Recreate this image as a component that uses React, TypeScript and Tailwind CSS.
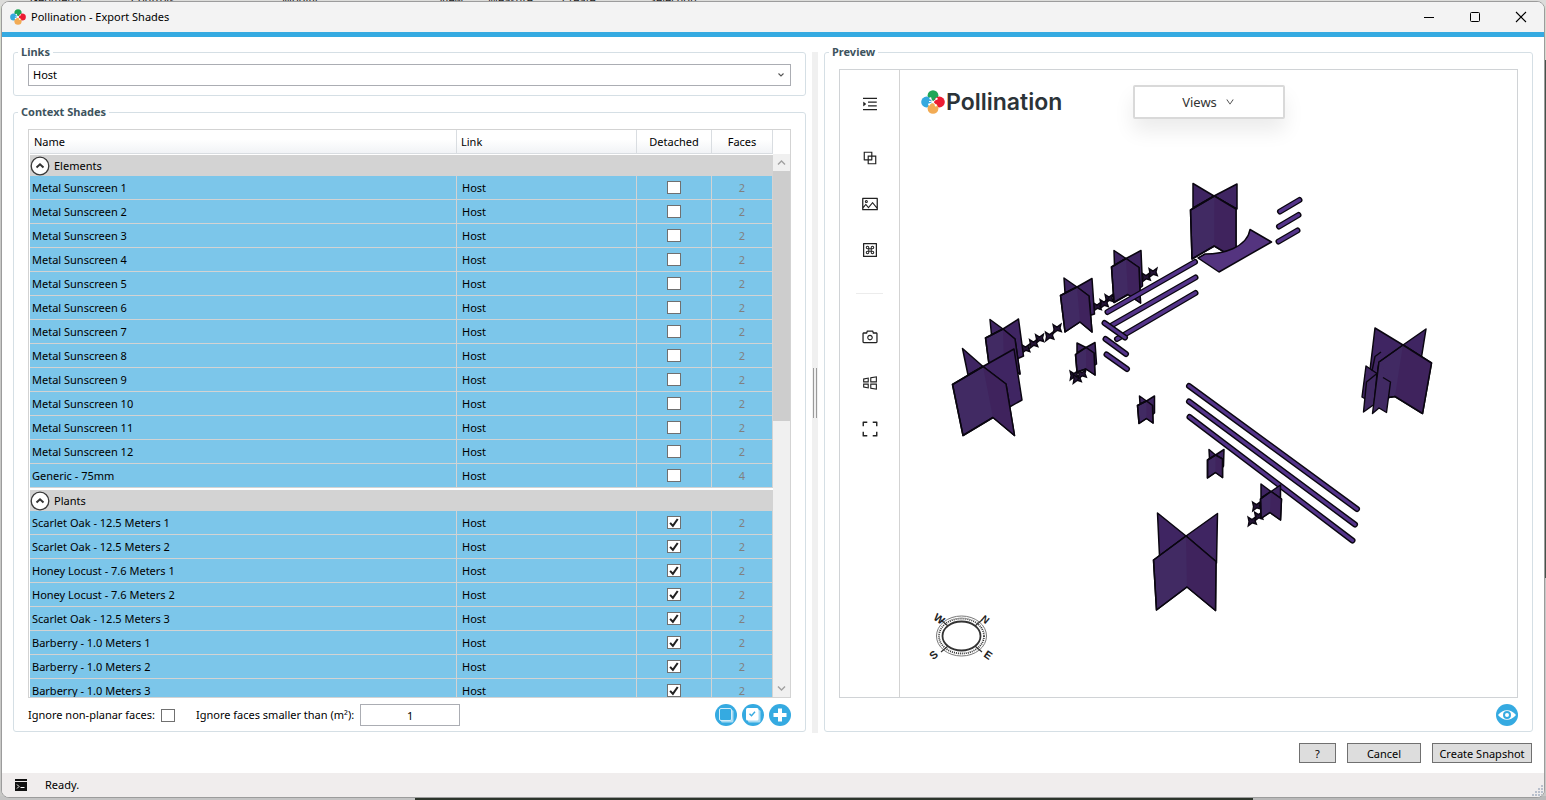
import { useState, type ReactNode } from "react";
import {
  AiOutlineBlock,
  AiOutlineCamera,
  AiOutlineDown,
  AiOutlineExpand,
  AiOutlineMacCommand,
  AiOutlineMenuUnfold,
  AiOutlinePicture,
  AiOutlineWindows,
} from "react-icons/ai";

type Shade = { name: string; faces: number; detached: boolean };

const elements: Shade[] = [
  ...Array.from({ length: 12 }, (_, i) => ({ name: `Metal Sunscreen ${i + 1}`, faces: 2, detached: false })),
  { name: "Generic - 75mm", faces: 4, detached: false },
];

const plants: Shade[] = [
  "Scarlet Oak - 12.5 Meters 1",
  "Scarlet Oak - 12.5 Meters 2",
  "Honey Locust - 7.6 Meters 1",
  "Honey Locust - 7.6 Meters 2",
  "Scarlet Oak - 12.5 Meters 3",
  "Barberry - 1.0 Meters 1",
  "Barberry - 1.0 Meters 2",
  "Barberry - 1.0 Meters 3",
].map((name) => ({ name, faces: 2, detached: true }));

function Mark({ className }: { className: string }) {
  return (
    <svg viewBox="0 0 24 24" className={className} aria-hidden="true">
      <circle cx="12" cy="5.6" r="5.4" fill="#1fa657" />
      <circle cx="5.6" cy="12" r="5.4" fill="#35a9df" />
      <circle cx="18.4" cy="12" r="5.4" fill="#ec1c33" />
      <circle cx="12" cy="18.4" r="5.4" fill="#f2ab54" />
      <path
        d="M12 12 9.500 8.500M12 12l3.400-3M12 12l2.800 3.400M12 12l-3.600 2.200M12 12l-4-.6"
        stroke="#fff"
        strokeWidth="1"
      />
      <g fill="#fff">
        <circle cx="12" cy="12" r="1.2" />
        <circle cx="9.4" cy="8.4" r="1.1" />
        <circle cx="15.6" cy="8.8" r="1.1" />
        <circle cx="14.8" cy="15.4" r="1.1" />
        <circle cx="8.2" cy="14.4" r="1.1" />
      </g>
    </svg>
  );
}

function Check({ label, initial = false }: { label: string; initial?: boolean }) {
  const [on, setOn] = useState(initial);
  return (
    <span className="inline-grid h-[13px] w-[14px] align-middle">
      <input
        type="checkbox"
        aria-label={label}
        checked={on}
        onChange={() => setOn(!on)}
        className="col-start-1 row-start-1 h-[13px] w-[14px] appearance-none border border-[#707070] bg-white"
      />
      {on && (
        <svg viewBox="0 0 14 14" className="pointer-events-none col-start-1 row-start-1 h-[13px] w-[14px]" aria-hidden="true">
          <path d="M2.8 7.4 5.8 10.6 11 3.2" fill="none" stroke="#212121" strokeWidth="2.2" />
        </svg>
      )}
    </span>
  );
}

function Group({ title, children, className = "" }: { title: string; children: ReactNode; className?: string }) {
  return (
    <fieldset className={`flex min-w-0 flex-col rounded-[3px] border border-[#d5dfe5] px-[14px] ${className}`}>
      <legend className="-ml-[10px] px-[3px] font-bold leading-4 text-[#3d535e]">{title}</legend>
      {children}
    </fieldset>
  );
}

function Section({ title, rows, first }: { title: string; rows: Shade[]; first?: boolean }) {
  return (
    <tbody>
      <tr className={first ? "h-[22px]" : "h-[23px]"}>
        <th
          colSpan={4}
          scope="rowgroup"
          className={`border-white bg-[#d3d3d3] p-0 text-left font-normal ${first ? "border-t" : "border-t-2"}`}
        >
          <div className="flex h-[21px] items-center gap-1">
            <button type="button" aria-label={`Collapse ${title}`} className="h-5 w-5">
              <svg viewBox="0 0 20 20" className="h-5 w-5" aria-hidden="true">
                <circle cx="10" cy="10" r="8.8" fill="#fff" stroke="#3a3a3a" strokeWidth="1.3" />
                <path d="M6.5 11.6 10 8.3l3.5 3.3" fill="none" stroke="#333" strokeWidth="2" />
              </svg>
            </button>
            {title}
          </div>
        </th>
      </tr>
      {rows.map((row) => (
        <tr key={row.name} className="h-6 bg-[#7cc6ea]">
          <td className="border-r border-b border-[#d3d3d3] py-0 pl-0.5">{row.name}</td>
          <td className="border-r border-b border-[#d3d3d3] py-0 pl-[5px]">Host</td>
          <td className="border-r border-b border-[#d3d3d3] p-0 text-center leading-none">
            <Check label={`${row.name} detached`} initial={row.detached} />
          </td>
          <td className="border-r border-b border-[#d3d3d3] p-0 text-center text-[#808080]">{row.faces}</td>
        </tr>
      ))}
    </tbody>
  );
}

function ShadeTable() {
  const head = "border-r border-b border-[#d9dde1] bg-linear-to-b from-white from-40% to-[#f1f3f6] p-0 font-normal";
  return (
    <div className="flex min-h-0 flex-1 border border-[#d3d3d3]">
      <div className="min-w-0 flex-1 overflow-hidden pl-px">
        <table className="w-full table-fixed border-separate border-spacing-0">
          <colgroup>
            <col />
            <col className="w-[180px]" />
            <col className="w-[75px]" />
            <col className="w-[61px]" />
          </colgroup>
          <thead>
            <tr className="h-6">
              <th className={`${head} text-left`}>
                <span className="pl-1">Name</span>
              </th>
              <th className={`${head} text-left`}>
                <span className="pl-1">Link</span>
              </th>
              <th className={`${head} text-center`}>Detached</th>
              <th className={`${head} text-center`}>Faces</th>
            </tr>
          </thead>
          <Section title="Elements" rows={elements} first />
          <Section title="Plants" rows={plants} />
        </table>
      </div>
      <div className="flex w-[17px] flex-col pt-6" aria-hidden="true">
        <div className="flex min-h-0 flex-1 flex-col bg-[#f0f0f0]">
          <svg viewBox="0 0 17 17" className="h-[17px] w-[17px]">
            <path d="M5 10.5 8.5 7l3.5 3.5" fill="none" stroke="#a0a0a0" strokeWidth="1.4" />
          </svg>
          <div className="h-[46%] bg-[#cdcdcd]" />
          <div className="flex-1" />
          <svg viewBox="0 0 17 17" className="h-[17px] w-[17px]">
            <path d="M5 6.5 8.5 10 12 6.5" fill="none" stroke="#a0a0a0" strokeWidth="1.4" />
          </svg>
        </div>
      </div>
    </div>
  );
}

function RoundButton({ label, children }: { label: string; children: ReactNode }) {
  return (
    <button type="button" aria-label={label} className="h-[22px] w-[22px]">
      <svg viewBox="0 0 22 22" className="h-[22px] w-[22px]" aria-hidden="true">
        <circle cx="11" cy="11" r="11" fill="#35aae1" />
        {children}
      </svg>
    </button>
  );
}

type Pt = [number, number];
type PlantShape = { back: string[]; c: Pt; fl: Pt; flb: Pt; b: Pt; frb: Pt; fr: Pt };

const INK = "#0a0610";

function Plant({ back, c, fl, flb, b, frb, fr }: PlantShape) {
  return (
    <g stroke={INK} strokeWidth="1.5" strokeLinejoin="round">
      {back.map((p) => (
        <polygon key={p} points={p} fill="#3f2562" />
      ))}
      <polygon points={[c, fl, flb, b, frb, fr].join(" ")} fill="#412a63" />
      <polygon points={[c, fr, frb, b].join(" ")} fill="#3f235d" stroke="none" />
      <polygon points={[c, fl, flb, b, frb, fr].join(" ")} fill="none" />
    </g>
  );
}

const backPlants: PlantShape[] = [
  { back: ["1193,183.5 1214,196 1193,208", "1237,184 1214,196 1237,209"], c: [1214.3, 196], fl: [1190.5, 210], flb: [1192, 259], b: [1214.3, 246], frb: [1236, 259], fr: [1236, 209] },
  { back: ["1114,250.5 1126,258.5 1114.5,266", "1141,250.5 1126,258.5 1137,284 1140,288 1142.5,286"], c: [1126, 258.5], fl: [1111.5, 267], flb: [1114, 302.5], b: [1128, 294.5], frb: [1140.5, 303], fr: [1139, 267.5] },
  { back: ["1064,278 1077,287 1065,293", "1092,278.5 1077,287 1088,316 1094.5,314"], c: [1077, 287], fl: [1060.5, 295.5], flb: [1065, 332], b: [1080, 322], frb: [1092, 332], fr: [1089, 296] },
  { back: ["990,319.5 1003,329 991.5,335", "1018.5,319 1003,329 1015,360 1023.5,356"], c: [1003, 329], fl: [985.5, 338], flb: [990, 372], b: [1004, 365], frb: [1020, 374], fr: [1015, 339] },
  { back: ["962.5,348.5 983,366.5 968,375", "1014,349 983,366.5 1006,409 1022,400"], c: [983, 366.5], fl: [952.5, 384.5], flb: [963, 435.5], b: [993, 417.5], frb: [1014.5, 435.5], fr: [1006, 384] },
  { back: ["1077,343 1086,347.5 1077,353", "1095,342.5 1086,347.5 1092,367 1096.5,364"], c: [1086, 347.5], fl: [1075.5, 354.5], flb: [1077, 372], b: [1086, 369], frb: [1095, 375], fr: [1094, 353] },
];

const frontPlants: PlantShape[] = [
  { back: ["1139.5,396 1146.5,401 1140,404", "1154.5,396 1146.5,401 1152,415 1154.5,413"], c: [1146.5, 401], fl: [1137.5, 405.5], flb: [1139, 423.5], b: [1146.5, 418.5], frb: [1153, 423], fr: [1152.5, 405.5] },
  { back: ["1209,449.5 1215.5,455 1209.5,459", "1224,449.5 1215.5,455 1222,468 1223.5,466"], c: [1215.5, 455], fl: [1207.5, 460], flb: [1207.5, 478], b: [1215.5, 472.5], frb: [1222.5, 477.5], fr: [1222.5, 459] },
  { back: ["1261,484 1271,491.5 1261,498", "1280.5,485 1271,491.5 1280.5,498"], c: [1271, 491.5], fl: [1260.5, 499], flb: [1261, 518.5], b: [1270, 512.5], frb: [1280.5, 520], fr: [1281.5, 499] },
  { back: ["1157.5,513 1186,536 1159.5,556", "1217.5,513.5 1186,536 1216.5,563"], c: [1186, 536], fl: [1153.5, 560], flb: [1156.5, 610], b: [1187, 587], frb: [1215.5, 610.5], fr: [1216, 561.5] },
  { back: ["1375,328 1403,345 1380,378 1370,370", "1426,329 1403,345 1421.5,357"], c: [1403, 345], fl: [1379, 362], flb: [1374, 400], b: [1395, 396.5], frb: [1422.5, 413.5], fr: [1431.5, 363] },
];

const slats: [number, number, number, number][] = [
  [1280, 211.5, 1299.5, 200],
  [1279, 226.5, 1298.5, 215],
  [1278.5, 241.5, 1297.5, 230.5],
  [1107.5, 312, 1195, 262],
  [1111.5, 325.5, 1195.5, 277.5],
  [1117, 339, 1195.5, 293],
  [1104.5, 323, 1125, 337.5],
  [1105.5, 339, 1126, 354],
  [1106.5, 354.5, 1127, 369],
  [1189, 386, 1357, 509],
  [1189, 401.5, 1355, 524.5],
  [1189.5, 417, 1352.5, 540.5],
];

const shrubs: Pt[] = [
  [1146, 277], [1153, 272.5], [1109, 298.5], [1104, 303.5], [1097, 306.5],
  [1057, 328.5], [1049.5, 336], [1039.5, 338.5], [1033.5, 343.5], [1025.5, 348.5],
  [1074, 375], [1077, 378.5], [1082, 374], [1256.5, 506], [1258.5, 516], [1252, 521],
];

function Scene() {
  return (
    <svg viewBox="900 70 617 627" className="h-full w-full" role="img" aria-label="Shade geometry">
      {shrubs.map(([x, y]) => (
        <path
          key={`${x}-${y}`}
          d={`M${x - 4} ${y - 4}l4 2.6 4-3-1 4 1.4 3.6-4-1.4-4.2 3.2.8-4.4Z`}
          fill="#241436"
          stroke={INK}
          strokeWidth="1.3"
        />
      ))}
      {backPlants.map((p) => (
        <Plant key={p.c.join()} {...p} />
      ))}
      {slats.map(([a, b, c, d]) => (
        <g key={`${a}-${b}`} strokeLinecap="round">
          <line x1={a} y1={b} x2={c} y2={d} stroke={INK} strokeWidth="6" />
          <line x1={a} y1={b} x2={c} y2={d} stroke="#54348a" strokeWidth="3.2" />
        </g>
      ))}
      <path
        d="M1250 229.5 1271.5 242 1219 272 1198 258 1205 254C1222 254 1247 248 1250 229.5Z"
        fill="#54347f"
        stroke={INK}
        strokeWidth="1.5"
        strokeLinejoin="round"
      />
      {frontPlants.map((p) => (
        <Plant key={p.c.join()} {...p} />
      ))}
      <g stroke={INK} strokeWidth="1.4" strokeLinejoin="round">
        <path d="M1366 366 1377 373.5 1374 404 1362 397Z" fill="#3f2562" />
        <path d="M1377 373.5 1366.5 382 1363.5 412 1374 404.5Z" fill="#412a63" />
        <path d="M1380 362 1390.5 382 1386.5 412.5 1379 408 1372.5 413.5 1379 362Z" fill="#412a63" stroke="none" />
        <path
          d="M1379 362 1372.5 413.5 1379 408 1386.5 412.5 1390.5 382 1383 377.5M1381 352 1375 356.5 1372 371"
          fill="none"
        />
      </g>
      <g fill="none" stroke="#333">
        <ellipse cx="961.5" cy="636" rx="25" ry="20" strokeWidth="1" stroke="#777" />
        <ellipse cx="961.5" cy="636" rx="22.5" ry="17.5" strokeWidth="1.8" strokeDasharray="1 1" />
        <ellipse cx="961.5" cy="636" rx="19" ry="14.5" strokeWidth="1.8" />
        <path d="m941 620 7 6M982 620l-7 6M941 652l7-6M982 652l-7-6" strokeWidth="1.2" />
      </g>
      <g fill="#222" className="font-['Liberation_Sans'] text-[11px] font-bold" textAnchor="middle">
        <text transform="translate(937 622) rotate(35)">W</text>
        <text transform="translate(983 622) rotate(40)" className="text-[10px]">N</text>
        <text transform="translate(936 658) rotate(-40)">S</text>
        <text transform="translate(986 658) rotate(35)">E</text>
      </g>
    </svg>
  );
}

const toolIcon = "flex h-[46px] w-full items-center justify-center text-[#222]";

function Viewer() {
  return (
    <div className="flex min-h-0 flex-1 border border-[#d0d3d6]">
      <nav aria-label="Viewer tools" className="flex w-[60px] shrink-0 flex-col items-center border-r border-[#d3d3d3] pt-[11px] text-[18px]">
        <button type="button" aria-label="Expand menu" className={`${toolIcon} mb-2`}><AiOutlineMenuUnfold /></button>
        <button type="button" aria-label="Layers" className={toolIcon}><AiOutlineBlock /></button>
        <button type="button" aria-label="Images" className={toolIcon}><AiOutlinePicture /></button>
        <button type="button" aria-label="Shortcuts" className={toolIcon}><AiOutlineMacCommand /></button>
        <hr className="my-5 w-[27px] border-t border-[#ececec]" />
        <button type="button" aria-label="Take picture" className={toolIcon}><AiOutlineCamera /></button>
        <button type="button" aria-label="Viewports" className={toolIcon}><AiOutlineWindows /></button>
        <button type="button" aria-label="Full screen" className={toolIcon}><AiOutlineExpand /></button>
      </nav>
      <div className="relative min-w-0 flex-1 overflow-hidden">
        <Scene />
        <div className="absolute top-4 left-[21px] flex items-center gap-px font-[Inter] text-[23px] leading-8 font-semibold text-[#2b3338]">
          <Mark className="h-6 w-6" />
          Pollination
        </div>
        <button
          type="button"
          className="absolute top-[15px] left-1/2 flex h-[34px] w-[152px] -translate-x-1/2 items-center justify-center gap-2 rounded-[2px] border-2 border-[#d9d9d9] bg-white text-[13px] text-[#333] shadow-[0_12px_20px_rgba(0,0,0,0.08)]"
        >
          Views
          <AiOutlineDown className="text-[10px]" />
        </button>
      </div>
    </div>
  );
}

function Desktop() {
  return (
    <div className="absolute inset-0 flex flex-col overflow-hidden bg-[#c8c8c6]" aria-hidden="true">
      <div className="h-[60px] bg-[#d6dbcf]">
        <div className="grid h-[6px] grid-cols-[101px_151px_157px_49px_74px_88px_1fr] content-end bg-[#dcdcda] pl-[30px] text-[11px] leading-3 text-[#222]">
          <span>Geometry</span>
          <span>Controls</span>
          <span>Modify</span>
          <span>View</span>
          <span>Measure</span>
          <span>Create</span>
          <span>Selection</span>
        </div>
      </div>
      <div className="flex-1 border-r-4 border-[#46534a]" />
      <div className="flex h-[222px] items-end">
        <div className="h-1 w-[415px] bg-[#c4c4c4]" />
        <div className="h-1 w-[838px] bg-[#2d352c]" />
        <div className="h-1 flex-1 bg-[#b9b9b9]" />
      </div>
    </div>
  );
}

const dialogButton = "h-5 border border-[#707070] bg-[#dddddd] pt-px leading-none";

export default function App() {
  return (
    <div className="relative flex h-screen min-h-[480px] flex-col px-px pt-px pb-[2px] font-['Noto_Sans',sans-serif] text-[11px] leading-4 text-black">
      <Desktop />
      <main className="relative flex min-h-0 flex-1 flex-col overflow-hidden rounded-lg border border-[#9c9c9c] bg-white">
        <header className="flex h-[30px] shrink-0 items-center bg-[#f3f3f3] pl-2">
          <Mark className="h-4 w-4" />
          <h1 className="flex-1 pl-[5px] font-normal">Pollination - Export Shades</h1>
          <button type="button" aria-label="Minimize" className="flex h-full w-[46px] items-center justify-center">
            <svg viewBox="0 0 12 12" className="h-3 w-3"><path d="M1 6.5h10" stroke="#000" /></svg>
          </button>
          <button type="button" aria-label="Maximize" className="flex h-full w-[46px] items-center justify-center">
            <svg viewBox="0 0 12 12" className="h-3 w-3"><rect x="1.5" y="1.5" width="9" height="9" rx="1" fill="none" stroke="#000" /></svg>
          </button>
          <button type="button" aria-label="Close" className="flex h-full w-[46px] items-center justify-center">
            <svg viewBox="0 0 12 12" className="h-3 w-3"><path d="m1 1 10 10M11 1 1 11" stroke="#000" strokeWidth="1.1" /></svg>
          </button>
        </header>
        <div className="h-[5px] shrink-0 bg-[#35aae1]" />

        <div className="grid min-h-0 flex-1 grid-cols-[793fr_6px_709fr] gap-[6px] px-[11px] pt-[7px]">
          <div className="flex min-h-0 min-w-0 flex-col gap-2">
            <Group title="Links" className="pb-[9px]">
              <div className="grid pt-1">
                <select aria-label="Link" className="col-start-1 row-start-1 h-[22px] appearance-none border border-[#abadb3] bg-white pl-1">
                  <option>Host</option>
                </select>
                <svg viewBox="0 0 8 8" className="pointer-events-none col-start-1 row-start-1 mr-[6px] h-2 w-2 self-center justify-self-end" aria-hidden="true">
                  <path d="M1.5 2.5 4 5l2.5-2.5" fill="none" stroke="#555" strokeWidth="1.1" />
                </svg>
              </div>
            </Group>
            <Group title="Context Shades" className="min-h-0 flex-1 pb-[5px]">
              <div className="flex min-h-0 flex-1 flex-col pt-[9px]">
                <ShadeTable />
                <div className="mt-[6px] flex h-[22px] shrink-0 items-center">
                  <label className="flex items-center gap-[6px]">
                    Ignore non-planar faces:
                    <Check label="Ignore non-planar faces" />
                  </label>
                  <label className="ml-[21px] flex items-center gap-[6px] whitespace-nowrap">
                    Ignore faces smaller than (m²):
                    <input type="text" defaultValue="1" className="h-[22px] w-[100px] border border-[#abadb3] bg-white text-center" />
                  </label>
                  <div className="ml-auto flex gap-[5px]">
                    <RoundButton label="Select all">
                      <rect x="6" y="6" width="12.5" height="12.5" rx="1.5" fill="#a8dbf3" />
                      <rect x="4.5" y="4.5" width="12" height="12" rx="1.5" fill="#35aae1" stroke="#d3edf9" />
                    </RoundButton>
                    <RoundButton label="Select detached">
                      <rect x="6" y="6" width="12.5" height="12.5" rx="1.5" fill="#a8dbf3" />
                      <rect x="4" y="4" width="12.5" height="12.5" rx="1.5" fill="#fff" />
                      <path d="m7.5 9.8 2 2 3.5-4" fill="none" stroke="#35aae1" strokeWidth="1.4" />
                    </RoundButton>
                    <RoundButton label="Add shades">
                      <path d="M11 4.5v13M4.5 11h13" stroke="#fff" strokeWidth="4" />
                    </RoundButton>
                  </div>
                </div>
              </div>
            </Group>
          </div>

          <div className="mt-2 -mb-px flex items-center justify-center bg-[#f0f0f0]" role="separator" aria-orientation="vertical">
            <div className="h-[50px] w-1 border-x border-[#9a9a9a]" />
          </div>

          <Group title="Preview" className="min-h-0 pb-[5px]">
            <div className="flex min-h-0 flex-1 flex-col gap-[6px] pt-[9px]">
              <Viewer />
              <div className="flex justify-end">
                <RoundButton label="Show preview">
                  <path d="M2 11C7 4.600 15 4.600 20 11 15 17.400 7 17.400 2 11Z" fill="#fff" />
                  <circle cx="11" cy="11" r="3" fill="none" stroke="#35aae1" strokeWidth="2" />
                </RoundButton>
              </div>
            </div>
          </Group>
        </div>

        <div className="flex shrink-0 justify-end gap-[11px] pt-[11px] pr-3 pb-[10px]">
          <button type="button" className={`${dialogButton} w-[37px]`}>?</button>
          <button type="button" className={`${dialogButton} w-[74px]`}>Cancel</button>
          <button type="button" className={`${dialogButton} w-[100px] whitespace-nowrap`}>Create Snapshot</button>
        </div>

        <footer className="flex h-6 shrink-0 items-center gap-[18px] bg-[#f0eded] pl-[13px]">
          <svg viewBox="0 0 12 12" className="h-3 w-3" aria-hidden="true">
            <path d="M0 0h12v2H0zM0 3h12v9H0z" fill="#111" />
            <path d="m2 5.500 2 2-2 2M5.500 8.500h4" fill="none" stroke="#fff" />
          </svg>
          <span className="flex-1">Ready.</span>
          <svg viewBox="0 0 12 12" className="h-3 w-3 self-end" fill="#b9c0cc" aria-hidden="true">
            <path d="M9 0h2v2H9zM6 3h2v2H6zM9 3h2v2H9zM3 6h2v2H3zM6 6h2v2H6zM9 6h2v2H9zM0 9h2v2H0zM3 9h2v2H3zM6 9h2v2H6zM9 9h2v2H9z" />
          </svg>
        </footer>
      </main>
    </div>
  );
}
